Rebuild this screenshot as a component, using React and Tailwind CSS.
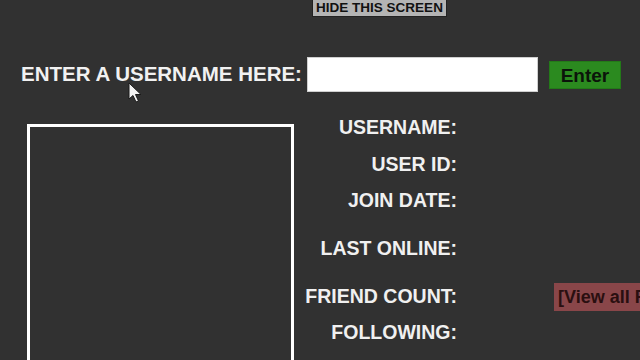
import React from 'react';

const rows = [
  { label: 'USERNAME:', h: 'h-[36px]' },
  { label: 'USER ID:', h: 'h-[37px]' },
  { label: 'JOIN DATE:', h: 'h-[36px]' },
  { label: 'LAST ONLINE:', h: 'h-[60px]' },
  { label: 'FRIEND COUNT:', h: 'h-[36px]', friends: true },
  { label: 'FOLLOWING:', h: 'h-[36px]' },
  { label: 'FOLLOWERS:', h: 'h-[36px]' },
];

const Cursor = () => (
  <svg className="absolute left-[128px] top-[82px]" width="16" height="22" viewBox="0 0 16 22">
    <path d="M1 1 L1 17 L5 13.5 L8 20 L10.5 19 L7.5 12.5 L13 12.5 Z" fill="#f2f2f2" stroke="#1a1a1a" strokeWidth="1" strokeLinejoin="round" />
  </svg>
);

export default function App() {
  return (
    <div className="relative w-[640px] h-[360px] overflow-hidden bg-[#313131] font-['Liberation_Sans',Arial,sans-serif] font-bold">
      <div className="flex">
        <button
          type="button"
          className="ml-[313px] w-[133px] h-[16px] bg-[#b4b4b4] text-[13.5px] leading-[16px] text-[#111] text-center outline outline-1 outline-[#222]"
        >
          HIDE THIS SCREEN
        </button>
      </div>

      <div className="mt-[41px] flex items-center h-[35px]">
        <span className="ml-[21px] text-[20.5px] text-[#f1f1f1] whitespace-nowrap">ENTER A USERNAME HERE:</span>
        <input type="text" className="ml-[5px] w-[231px] h-[35px] bg-white border border-[#cfcfcf] outline-none" />
        <button
          type="button"
          className="ml-[11px] w-[72px] h-[28px] bg-[#2b8a1f] text-[19px] leading-[28px] text-[#0b140a] border border-[#237a18]"
        >
          Enter
        </button>
      </div>

      <div className="mt-[18px] flex">
        <div className="ml-[27px] mt-[14px] w-[267px] h-[260px] shrink-0 border-[3px] border-white" />
        <div className="ml-[6px] flex flex-col">
          {rows.map((row) => (
            <div key={row.label} className={`flex items-center ${row.h}`}>
              <span className="w-[157px] text-right text-[19.5px] text-[#f0f0f0] whitespace-nowrap">{row.label}</span>
              {row.friends && (
                <span className="ml-[97px] h-[28px] pl-[4px] pr-[4px] bg-[#894649] text-[18px] leading-[28px] text-[#2a0f10] whitespace-nowrap">
                  [View all Friends]
                </span>
              )}
            </div>
          ))}
        </div>
      </div>

      <Cursor />
    </div>
  );
}
